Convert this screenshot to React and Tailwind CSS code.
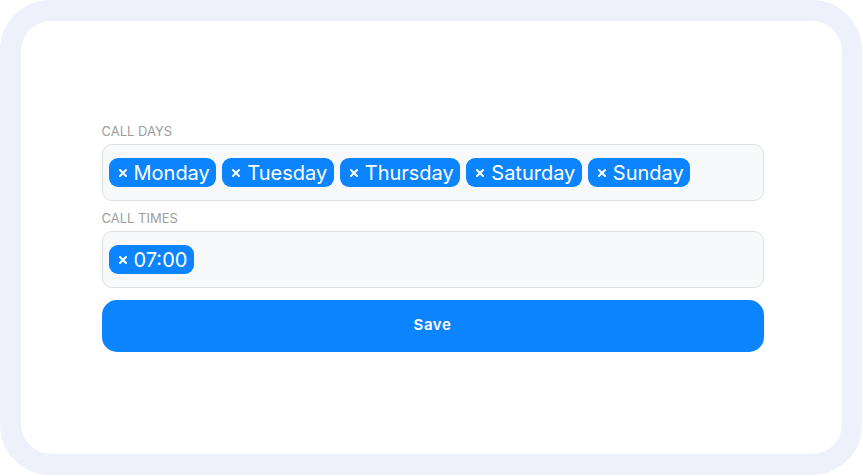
import { X } from "lucide-react";

const days = ["Monday", "Tuesday", "Thursday", "Saturday", "Sunday"];
const times = ["07:00"];

function Chip({ label }) {
  return (
    <span className="flex items-center gap-[5px] h-[29px] pl-[8px] pr-[6.5px] rounded-[9px] bg-[#0b84fe] text-white text-[20px] leading-none">
      <X size={12} strokeWidth={4} className="shrink-0" />
      <span>{label}</span>
    </span>
  );
}

function Field({ label, items }) {
  return (
    <div>
      <div className="text-[13px] leading-[20px] text-[#9d9d9d] uppercase mb-[3px]">
        {label}
      </div>
      <div className="flex items-center flex-wrap gap-[6px] h-[57px] px-[6px] pt-[1px] rounded-[10px] bg-[#f8f9fb] border-[1.5px] border-[#dedfe2]">
        {items.map((item) => (
          <Chip key={item} label={item} />
        ))}
      </div>
    </div>
  );
}

export default function App() {
  return (
    <div
      className="w-[863px] h-[476px] bg-white"
      style={{ fontFamily: "Inter, 'Noto Sans', sans-serif" }}
    >
      <div className="w-[862px] h-[475px] rounded-[50px] bg-[#eef0fc] pt-[21px] pb-[21px] pl-[21px] pr-[20px]">
        <div className="h-full rounded-[30px] bg-white flex items-center justify-center">
          <div className="w-[662px] ml-[2px] mb-[3px] flex flex-col">
            <Field label="Call Days" items={days} />
            <div className="mt-[7px]">
              <Field label="Call Times" items={times} />
            </div>
            <button className="mt-[12px] h-[52px] rounded-[15px] bg-[#0b84fe] text-white text-[15px] font-semibold tracking-[0.04em]">
              Save
            </button>
          </div>
        </div>
      </div>
    </div>
  );
}
